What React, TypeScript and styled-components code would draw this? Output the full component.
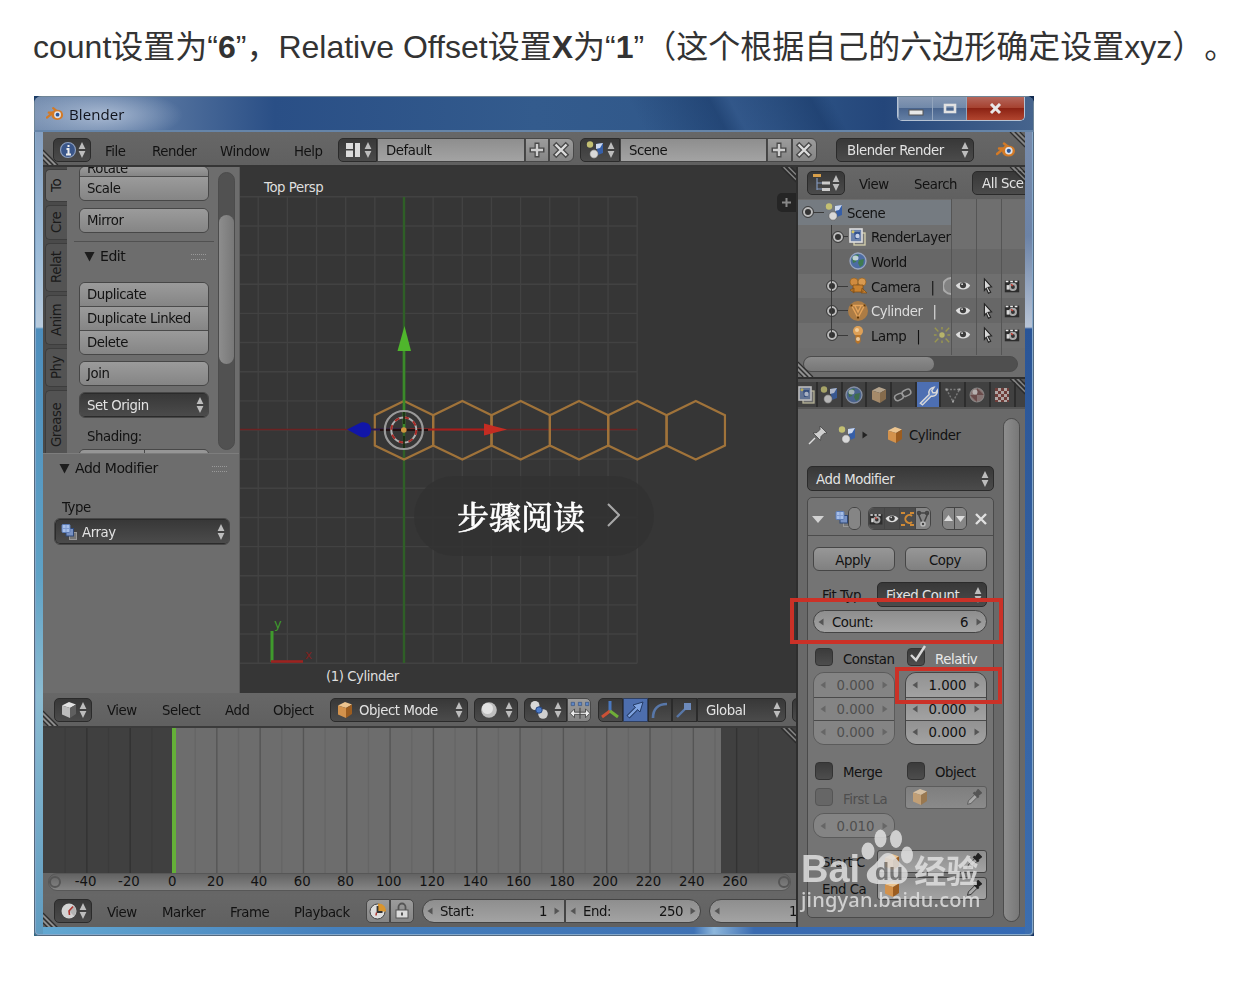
import React from "react";
import styled, { createGlobalStyle, css } from "styled-components";

const Global = createGlobalStyle`
  * { box-sizing: border-box; }
  body { margin: 0; background: #fff; }
`;

/* ---------- article ---------- */
const Page = styled.main`
  padding: 23px 0 58px 33px;
  width: 1242px;
  overflow: hidden;
`;
const Caption = styled.p`
  margin: 0;
  height: 48px;
  font: 32px/48px "Liberation Sans", "Noto Sans CJK SC", sans-serif;
  text-spacing-trim: space-all;
  color: #333;
  white-space: nowrap;
`;
const Shot = styled.div`
  position: relative;
  margin: 25px 0 0 1px;
  width: 1000px;
  height: 840px;
  overflow: hidden;
  background: linear-gradient(90deg, #1b3c66, #10294f) top / 100% 50% no-repeat, linear-gradient(90deg, #2f6580, #12305f) bottom / 100% 50% no-repeat;
`;

/* ---------- window frame ---------- */
const Win = styled.section`
  width: 1000px;
  height: 840px;
  padding: 0 9px 9px;
  display: flex;
  flex-direction: column;
  overflow: hidden;
  filter: blur(0.6px);
  font: 13.3px/16px "DejaVu Sans", sans-serif;
  letter-spacing: -0.45px;
  color: #121212;
  white-space: nowrap;
  border-radius: 8px 8px 5px 5px;
  box-shadow: inset 0 0 0 1px #54697e, inset 0 0 0 2px #86a9cb;
  background:
    linear-gradient(#7f97b8 0, #9bbbd8 150px, #b8cbdd 231px, #4d8dbc 233px, #5fa2c6 480px, #8cbcd2 600px, #5f9bc0 840px) left / 9px 100% no-repeat,
    linear-gradient(#7c8fae 0, #6c83a7 140px, #b8c4d6 231px, #2a5597 233px, #335f9f 480px, #3c6eb0 840px) right / 9px 100% no-repeat,
    linear-gradient(90deg, #64a9d2, #4580bd 30%, #3f72b4 66%, #8db7dc 68%, #3a6bb0 72%, #356ab4) bottom / 100% 9px no-repeat,
    #2b5083;
`;
const TitleBar = styled.header`
  height: 36px;
  flex: none;
  margin: 0 -9px;
  padding: 0 8px 0 11px;
  display: flex;
  border: 1px solid #6f8596;
  border-bottom: 2px solid #6685a9;
  background:
    radial-gradient(ellipse 80px 26px at 68px 18px, #b9c7dccc, #8fa8c800),
    linear-gradient(62deg, #0000 60%, #1b3b6a99 68%, #34578a80 70%, #1b3b6a99 78%, #0000 80%),
    linear-gradient(90deg, #7890b1, #5775a0 12%, #2a4f86 24%, #335b8d 50%, #2f5688 75%, #24467a 85%, #46648d);
`;
const TitleText = styled.h1`
  margin: 8px auto 0 5px;
  font: 15px/18px "Open Sans", sans-serif;
  letter-spacing: 0.1px;
  color: #10131c;
`;
const Captions = styled.div`
  display: flex;
  height: 24px;
  border: 1px solid #b6c3d4;
  border-top: 0;
  border-radius: 0 0 5px 5px;
  overflow: hidden;
`;
const CaptionBtn = styled.span<{ $w: number; $close?: boolean }>`
  width: ${(p) => p.$w}px;
  display: grid;
  place-items: center;
  border-left: 1px solid #93a5bd;
  background: ${(p) =>
    p.$close ? "linear-gradient(#b5665b, #a5412f 48%, #8c2314 50%, #b1452f)" : "linear-gradient(#8799b4, #7088a9 48%, #4a658e 50%, #647fa4)"};
`;
const Client = styled.div`
  flex: 1;
  min-height: 0;
  display: flex;
  flex-direction: column;
  background: #6c6c6c;
  overflow: hidden;
`;

/* ---------- shared widgets ---------- */
const Bar = styled.div<{ $h: number; $pt?: number }>`
  position: relative;
  height: ${(p) => p.$h}px;
  flex: none;
  padding-top: ${(p) => p.$pt ?? 0}px;
  display: flex;
  align-items: center;
  overflow: hidden;
  background: linear-gradient(#676767, #606060);
`;
const MenuWord = styled.span<{ $w: number }>`
  width: ${(p) => p.$w}px;
  padding-top: 3px;
  flex: none;
`;
const Control = styled.div<{ $w: number; $ml?: number; $r?: string; $tone?: "dark" | "light" | "field" | "blue" | "dim"; $h?: number }>`
  width: ${(p) => p.$w}px;
  height: ${(p) => p.$h ?? 24}px;
  margin-left: ${(p) => p.$ml ?? 0}px;
  flex: none;
  display: flex;
  align-items: center;
  justify-content: space-between;
  padding: 0 ${(p) => (p.$w < 30 ? 1 : 4)}px;
  overflow: hidden;
  border: 1px solid #363636;
  border-radius: ${(p) => p.$r ?? "5px"};
  svg { flex: none; }
  ${(p) => {
    switch (p.$tone) {
      case "light":
        return css`background: linear-gradient(#9c9c9c, #858585); border-color: #484848;`;
      case "field":
        return css`background: linear-gradient(#8e8e8e, #a3a3a3); border-color: #444;`;
      case "dim":
        return css`background: linear-gradient(#7f7f7f, #8a8a8a); border-color: #5c5c5c; color: #4b4b4b;`;
      case "blue":
        return css`background: #4d6eae; border-color: #2f3f60;`;
      default:
        return css`background: linear-gradient(#383838, #4b4b4b); color: #e2e2e2; border-color: #2b2b2b;`;
    }
  }}
`;
const Txt = styled.span<{ $ml?: number }>`
  padding-top: 2px;
  margin-left: ${(p) => p.$ml ?? 4}px;
`;
const Grow = styled.span`
  flex: 1;
`;

const UpDown = ({ c = "#bdbdbd" }: { c?: string }) => (
  <svg width="8" height="18" viewBox="0 0 8 18" fill={c}>
    <path d="M4 1 7.4 8H.6zM4 17 .6 10h6.800z" />
  </svg>
);
const Arrow = ({ flip, c = "#555" }: { flip?: boolean; c?: string }) => (
  <svg width="6" height="8" viewBox="0 0 6 8" fill={c}>
    <path d={flip ? "M.5 .5 5.5 4 .5 7.5z" : "M5.5 .5.5 4l5 3.5z"} />
  </svg>
);
const HatchSvg = styled.svg<{ $at: "bl" | "tr" }>`
  position: absolute;
  ${(p) => (p.$at === "bl" ? "left: 0; bottom: 0;" : "right: 0; top: 0;")}
`;
const Hatch = ({ at }: { at: "bl" | "tr" }) => (
  <HatchSvg $at={at} width="16" height="16" viewBox="0 0 16 16" fill="none" strokeWidth="1.1">
    {at === "bl" ? (
      <>
        <path d="M0 1 15 16M0 6l10 10M0 11l5 5" stroke="#2c2c2c" />
        <path d="M0 3.500 12.500 16M0 8.500 7.500 16" stroke="#999" />
      </>
    ) : (
      <>
        <path d="M1 0l15 15M6 0l10 10M11 0l5 5" stroke="#2c2c2c" />
        <path d="M3.500 0 16 12.500M8.500 0 16 7.500" stroke="#8b8b8b" />
      </>
    )}
  </HatchSvg>
);

/* ---------- icons ---------- */
const Icon = ({ s = 20, children }: { s?: number; children: React.ReactNode }) => (
  <svg width={s} height={s} viewBox="0 0 20 20" fill="none">
    {children}
  </svg>
);
const BlenderLogo = () => (
  <Icon s={20}>
    <path d="M1 14 10 6.500M3 8.500h8M8 3.500l5 4" stroke="#d37a26" strokeWidth="2.400" strokeLinecap="round" />
    <ellipse cx="12.500" cy="11" rx="6.500" ry="5.600" fill="#d37a26" />
    <circle cx="12.800" cy="10.800" r="3.800" fill="#dfe3ea" />
    <circle cx="12.800" cy="10.800" r="2.100" fill="#28569a" />
  </Icon>
);
const InfoIcon = () => (
  <Icon>
    <circle cx="10" cy="10" r="7.500" fill="#3a5689" stroke="#8b9dbd" strokeWidth="1.200" />
    <path d="M10.500 5v2M8.500 9h2v5.500M8 14.500h5" stroke="#eee" strokeWidth="2" />
  </Icon>
);
const LayoutIcon = () => (
  <Icon>
    <path d="M3 3h7v6H3zM3 10.500h7V17H3zM12 3h5v14h-5z" fill="#dcdcdc" />
  </Icon>
);
const SceneIcon = () => (
  <Icon>
    <circle cx="5" cy="4.500" r="3.200" fill="#c3bf72" />
    <path d="M11 4l7-1v10l-5 2z" fill="#365fa8" />
    <path d="M11 4l7-1-3 5-4 1z" fill="#cdd9ef" />
    <circle cx="9" cy="14" r="4.200" fill="#d8d8d8" stroke="#555" strokeWidth=".6" />
  </Icon>
);
const PlusIcon = () => (
  <Icon s={20}>
    <path d="M10 2.500v15M2.500 10h15" stroke="#4a4a4a" strokeWidth="5" />
    <path d="M10 4v12M4 10h12" stroke="#cfcfcf" strokeWidth="2.400" />
  </Icon>
);
const CrossIcon = () => (
  <Icon s={20}>
    <path d="M3.500 3.500l13 13M16.500 3.500l-13 13" stroke="#4a4a4a" strokeWidth="5" />
    <path d="M4.500 4.500l11 11M15.500 4.500l-11 11" stroke="#dcdcdc" strokeWidth="2.400" />
  </Icon>
);
const CubeIcon = ({ c = "orange", s = 20 }: { c?: "orange" | "grey" | "pale"; s?: number }) => {
  const [a, b, d] = { orange: ["#ecc48f", "#d3924c", "#9c5d20"], grey: ["#e3e3e3", "#bcbcbc", "#5f5f5f"], pale: ["#d5bfa2", "#c19f76", "#997850"] }[c];
  return (
    <Icon s={s}>
      <path d="M10 2l7 2.500-6 3.500L3 5.500z" fill={a} />
      <path d="M3 5.500 11 8v10l-8-3.500z" fill={b} />
      <path d="M17 4.500v9.500l-6 4V8z" fill={d} />
    </Icon>
  );
};
const TreeIcon = () => (
  <Icon>
    <path d="M1 2.500h8" stroke="#d9a04a" strokeWidth="3" />
    <path d="M5 5v12M5 10h5M5 16h5" stroke="#8298bd" strokeWidth="1.200" />
    <path d="M10 10h8M10 16.500h8" stroke="#ccc" strokeWidth="3" />
  </Icon>
);
const ArrayIcon = () => (
  <Icon>
    <rect x="9.500" y="10.500" width="7" height="7" fill="#777" stroke="#999" />
    <rect x="6" y="6.500" width="7.500" height="7.500" fill="#7892c4" stroke="#2e4877" />
    <rect x="2" y="2.500" width="8" height="8" rx="1" fill="#a6bfe9" stroke="#5b7bb5" />
    <path d="M6 3v7M2.500 6.500h7" stroke="#7f9bd0" />
  </Icon>
);
const LayersIcon = () => (
  <Icon>
    <rect x="6" y="6" width="11" height="12" fill="#777" stroke="#d8d3b0" strokeWidth="1.300" />
    <rect x="2" y="2" width="12" height="13" fill="#6d83ab" stroke="#dedede" strokeWidth="1.600" />
    <path d="M6 5h6v4l-2 3H7z" fill="#34538f" />
    <circle cx="9.500" cy="9" r="2.200" fill="#c7d2e8" />
    <circle cx="5" cy="4.800" r="1.500" fill="#d4c667" />
  </Icon>
);
const WorldIcon = () => (
  <Icon>
    <circle cx="10" cy="10" r="8" fill="#4d6da3" stroke="#9aa7c0" strokeWidth="1.300" />
    <path d="M4 7c3-4 6-4 7-3l-2 3-1 4-3 1zM11 9l5-1-1 6-3 2-2-4z" fill="#3f7a50" />
    <ellipse cx="7.500" cy="7" rx="3" ry="2.500" fill="#dfe8f2" opacity=".8" />
  </Icon>
);
const CameraIcon = () => (
  <Icon>
    <circle cx="6" cy="6" r="4" fill="#d08b3f" stroke="#94611f" strokeWidth=".7" />
    <circle cx="14" cy="6" r="4" fill="#d99a50" stroke="#94611f" strokeWidth=".7" />
    <path d="M5 9h10v7H5zM2 14l4-2v5zM14 12l5 5h-6z" fill="#c9822f" stroke="#7d4c14" strokeWidth=".7" />
  </Icon>
);
const MeshIcon = ({ c = "#d58a37" }: { c?: string }) => (
  <Icon>
    {c === "#d58a37" && <circle cx="10" cy="10" r="10" fill="#ac7c45" />}
    <path
      d={c === "#d58a37" ? "M3.500 4.500h13L10 16.500zM7 5l3 6 3-6" : "M3.500 4.500h13L10 16.500z"}
      stroke={c === "#d58a37" ? "#e5a45a" : c}
      strokeWidth="1.400"
      strokeDasharray={c === "#d58a37" ? undefined : "2 1.500"}
    />
    <path d="M2.500 3.500h2v2h-2zM15.500 3.500h2v2h-2zM9 15.500h2v2H9z" fill={c === "#d58a37" ? "#5e3607" : "#bbb"} />
  </Icon>
);
const LampIcon = () => (
  <Icon>
    <circle cx="10" cy="6" r="5" fill="#dda057" />
    <path d="M7.500 10h5v7l-2.500 2-2.500-2z" fill="#b87428" />
    <circle cx="10" cy="14" r="2" fill="#e9c79b" />
    <circle cx="9" cy="5" r="2" fill="#f1cd9c" />
  </Icon>
);
const EyeIcon = ({ s = 18 }: { s?: number }) => (
  <Icon s={s}>
    <path d="M2 9.500C5 4.500 15 4.500 18 9.500 15 15.500 5 15.500 2 9.500z" fill="#dedede" />
    <circle cx="10" cy="9.200" r="3.400" fill="#3c3c3c" />
    <circle cx="9" cy="8" r="1" fill="#ddd" />
  </Icon>
);
const PointerIcon = () => (
  <Icon s={18}>
    <path d="M6 2l8 9-4 .5 3 5.500-2.500 1-2.500-5.500L6 15z" fill="#d8d8d8" stroke="#222" strokeWidth="1.200" />
  </Icon>
);
const SnapIcon = ({ s = 18 }: { s?: number }) => (
  <Icon s={s}>
    <path d="M2 4h16v13H2z" fill="#2c2c2c" />
    <path d="M3 5h3M8 5h3M13 5h3" stroke="#eee" strokeWidth="1.600" />
    <circle cx="11" cy="11" r="4.500" fill="#a9a9a9" />
    <circle cx="11" cy="11" r="2.200" fill="#333" />
    <path d="M4 9h3v5H4z" fill="#d9d9d9" />
    <path d="M9 8l2 2" stroke="#c23b30" strokeWidth="1.600" />
  </Icon>
);
const WrenchIcon = () => (
  <Icon s={22}>
    <path d="M3 17.500 11 9.500C10 6 12 3.500 15.500 3L13.500 6l1 2L17 8l1.500-2.500c.5 4-2.500 6-5.500 5.500L5 19z" fill="#6386c6" stroke="#d8d8d8" strokeWidth="1.300" />
  </Icon>
);
const LinkIcon = () => (
  <Icon s={20}>
    <rect x="1.500" y="9" width="9" height="6" rx="3" transform="rotate(-25 6 12)" stroke="#b2b2b2" strokeWidth="1.500" />
    <rect x="9" y="5" width="9" height="6" rx="3" transform="rotate(-25 13 8)" stroke="#b2b2b2" strokeWidth="1.500" />
  </Icon>
);
const MaterialIcon = () => (
  <Icon s={20}>
    <circle cx="10" cy="10" r="7" fill="#9a8381" stroke="#aaa" strokeWidth=".8" />
    <path d="M10 3v7h7M3 10h7v7" fill="#6c4140" opacity=".8" />
    <circle cx="8" cy="7" r="2.500" fill="#d7d0cf" />
  </Icon>
);
const TextureIcon = () => (
  <Icon s={20}>
    <path d="M3 3h14v14H3z" fill="#cfc3c0" />
    <path d="M3 3h3v3H3zM9 3h3v3H9zM15 3h2v3h-2zM6 6h3v3H6zM12 6h3v3h-3zM3 9h3v3H3zM9 9h3v3H9zM15 9h2v3h-2zM6 12h3v3H6zM12 12h3v3h-3zM3 15h3v2H3zM9 15h3v2H9zM15 15h2v2h-2z" fill="#7c3c38" />
  </Icon>
);
const PinIcon = () => (
  <Icon>
    <path d="M1 19l6-6" stroke="#ddd" strokeWidth="1.500" />
    <path d="M12 1l7 7-3 .5-3 3-.5 4L5 8l4-.5 3-3z" fill="#cfcfcf" stroke="#444" strokeWidth=".8" />
  </Icon>
);
const DropperIcon = ({ c = "#222" }: { c?: string }) => (
  <Icon s={17}>
    <path d="M3 18l1-4 8-8 3 3-8 8z" fill="#a9a9a9" stroke={c} />
    <path d="M10 4l6 6M12 6l3.500-4.500 3 3L14 8" stroke={c} strokeWidth="2.600" fill={c} />
  </Icon>
);
const ClockIcon = () => (
  <Icon>
    <circle cx="10" cy="10" r="7.500" fill="#d4d4d4" />
    <path d="M10 10l5-5a7 7 0 0 1 0 10z" fill="#777" opacity=".35" />
    <path d="M14 5.500l-4 4.500.500 4" stroke="#b03630" strokeWidth="1.600" />
  </Icon>
);
const SphereIcon = () => (
  <Icon>
    <circle cx="10" cy="10" r="7.800" fill="#bdbdbd" />
    <circle cx="8.500" cy="8.500" r="5.500" fill="#e2e2e2" />
  </Icon>
);
const PivotIcon = () => (
  <Icon>
    <circle cx="6" cy="5.500" r="4.500" fill="#d8d8d8" />
    <circle cx="14" cy="14" r="4.800" fill="#cfcfcf" />
    <circle cx="10" cy="10" r="3.200" fill="#4c7cc9" stroke="#27457e" />
  </Icon>
);
const ManipIcon = () => (
  <Icon s={22}>
    <path d="M2 3h3v3H2zM8.500 3h3v3h-3zM15 3h3v3h-3z" fill="#5d86c5" stroke="#35517f" strokeWidth=".6" />
    <path d="M1 13l4-4v3h10V9l4 4-4 4v-3H5v3z" fill="#ededed" stroke="#444" strokeWidth=".8" />
    <path d="M10 8v10" stroke="#444" />
  </Icon>
);
const AxisIcon = () => (
  <Icon>
    <path d="M10 11V1" stroke="#4a78bf" strokeWidth="3" />
    <path d="M10 11l-8 6" stroke="#cb5136" strokeWidth="3" />
    <path d="M10 11l8 6" stroke="#6fae38" strokeWidth="3" />
  </Icon>
);
const TranslateIcon = () => (
  <Icon>
    <path d="M3 17 11 9" stroke="#243b66" strokeWidth="4.500" />
    <path d="M8 5l10-3-3 10z" fill="#7fa3e0" stroke="#243b66" />
    <path d="M3.500 16.500 12 8" stroke="#7fa3e0" strokeWidth="2.400" />
  </Icon>
);
const ArcIcon = () => (
  <Icon>
    <path d="M3 18C3 9 8 4 17 4" stroke="#5877a8" strokeWidth="2.600" />
  </Icon>
);
const ScaleIcon = () => (
  <Icon>
    <path d="M3 17l9-9" stroke="#5877a8" strokeWidth="2.400" />
    <path d="M10 3h7v7h-7z" fill="#6d8abb" />
  </Icon>
);
const AutoKeyIcon = () => (
  <Icon>
    <circle cx="9.500" cy="10.500" r="7.500" fill="#dedede" stroke="#444" />
    <path d="M10 2.500c5 0 8 3 8 8h-8z" fill="#d9952e" />
    <path d="M9.500 5v6h5" stroke="#333" strokeWidth="1.800" />
    <path d="M8.500 11.500l-.5 3" stroke="#b03630" strokeWidth="1.500" />
  </Icon>
);
const LockIcon = () => (
  <Icon>
    <path d="M6.500 9V6a3.500 3.500 0 0 1 7 0v3" stroke="#555" strokeWidth="1.800" />
    <rect x="4" y="9" width="12" height="8" fill="#dcdcdc" stroke="#555" />
    <path d="M10 11.500v3" stroke="#555" strokeWidth="2" />
  </Icon>
);

/* ---------- main split ---------- */
const Split = styled.div`
  flex: 1;
  min-height: 0;
  display: flex;
  border-top: 2px solid #353535;
`;
const LeftSide = styled.div`
  width: 753px;
  flex: none;
  display: flex;
  flex-direction: column;
`;
const RightSide = styled.div`
  flex: 1;
  min-width: 0;
  display: flex;
  flex-direction: column;
  border-left: 2px solid #2e2e2e;
`;
const ViewRow = styled.div`
  height: 526px;
  display: flex;
  flex: none;
`;

/* ---------- tool shelf ---------- */
const Shelf = styled.aside`
  width: 197px;
  flex: none;
  background: #6d6d6d;
  border-right: 1px solid #5c5c5c;
`;
const ShelfTop = styled.div`
  height: 287px;
  display: flex;
  overflow: hidden;
  border-bottom: 1px solid #7d7d7d;
`;
const Tabs = styled.nav`
  width: 24px;
  background: #4a4a4a;
  display: flex;
  flex-direction: column;
  align-items: flex-end;
  gap: 3px;
  padding-top: 2px;
`;
const Tab = styled.span<{ $h: number; $on?: boolean }>`
  width: 22px;
  height: ${(p) => p.$h}px;
  flex: none;
  writing-mode: vertical-rl;
  transform: rotate(180deg);
  display: flex;
  align-items: center;
  justify-content: center;
  border: 1px solid #3d3d3d;
  border-left: 0;
  border-radius: 0 5px 5px 0;
  background: ${(p) => (p.$on ? "#6d6d6d" : "#535353")};
  color: #1a1a1a;
`;
const ToolCol = styled.div`
  width: 130px;
  margin-left: 12px;
`;
const Stack = styled.div<{ $mt?: number }>`
  margin-top: ${(p) => p.$mt ?? 0}px;
  border: 1px solid #474747;
  border-radius: 6px;
  overflow: hidden;
`;
const Tool = styled.div<{ $h?: number }>`
  height: ${(p) => p.$h ?? 23}px;
  padding: 4px 0 0 7px;
  background: linear-gradient(#9b9b9b, #858585);
  & + & {
    border-top: 1px solid #4b4b4b;
    height: 24px;
  }
`;
const CutTool = styled(Tool)`
  height: 9px;
  display: flex;
  align-items: flex-end;
  padding: 0 0 0 7px;
  line-height: 14px;
`;
const SectionHead = styled.h2<{ $mt: number; $line?: boolean }>`
  margin: ${(p) => p.$mt}px -5px 0;
  padding: 6px 6px 0 10px;
  height: 41px;
  display: flex;
  align-items: flex-start;
  font: 14px/17px "DejaVu Sans", sans-serif;
  border-top: ${(p) => (p.$line ? "1px solid #515151" : "0")};
  svg { margin: 3px 5px 0 0; }
`;
const Grip = styled.span`
  margin: 6px 2px 0 auto;
  width: 15px;
  height: 6px;
  border: dotted #999;
  border-width: 1px 0;
`;
const Small = styled.div<{ $mt: number; $ml: number }>`
  margin: ${(p) => p.$mt}px 0 0 ${(p) => p.$ml}px;
`;
const HalfRow = styled.div`
  margin-top: 4px;
  height: 12px;
  display: grid;
  grid-template-columns: 1fr 1fr;
  gap: 1px;
  background: #484848;
  border: 1px solid #484848;
  border-radius: 5px;
  overflow: hidden;
  i { background: #969696; }
`;
const VScroll = styled.div<{ $h: number; $mt: number; $ml: number }>`
  width: 17px;
  height: ${(p) => p.$h}px;
  margin: ${(p) => p.$mt}px 0 0 ${(p) => p.$ml}px;
  border: 1px solid #4c4c4c;
  border-radius: 9px;
  background: #515151;
  flex: none;
`;
const Thumb = styled.div<{ $mt: number; $h: number }>`
  height: ${(p) => p.$h}px;
  transform: translateY(${(p) => p.$mt}px);
  border-radius: 8px;
  background: linear-gradient(90deg, #8d8d8d, #787878);
`;
const Operator = styled.div`
  padding: 0 9px 0 11px;
`;
const Tri = () => (
  <svg width="11" height="11" viewBox="0 0 11 11" fill="#1d1d1d">
    <path d="M.5 1h10l-5 9.500z" />
  </svg>
);

/* ---------- 3D viewport ---------- */
const Viewport = styled.div`
  position: relative;
  flex: 1;
  background: #363636;
  overflow: hidden;
  svg { display: block; }
`;
const ViewText = styled.span<{ $x: number; $y: number }>`
  position: absolute;
  left: ${(p) => p.$x}px;
  top: ${(p) => p.$y}px;
  color: #dedede;
`;
const PlusTab = styled.span`
  position: absolute;
  right: 0;
  top: 26px;
  width: 19px;
  height: 19px;
  border-radius: 5px 0 0 5px;
  background: #252525;
  display: grid;
  place-items: center;
`;

const Scene3D = () => {
  const s = 29.15;
  const cx = 164;
  const cy = 264;
  const cols = Array.from({ length: 14 }, (_, i) => cx + (i - 5) * s);
  const rows = Array.from({ length: 17 }, (_, i) => cy + (i - 8) * s);
  return (
    <svg width="556" height="526" viewBox="0 1 556 526" fill="none">
      <g stroke="#424242" strokeWidth="1.400">
        {cols.map((x) => <path key={x} d={`M${x} ${cy - 8 * s}V${cy + 8 * s}`} />)}
        {rows.map((y) => <path key={y} d={`M0 ${y}H${cx + 8 * s}`} />)}
      </g>
      <path d={`M0 263.500H${cx + 8 * s}`} stroke="#6b2222" strokeWidth="1.500" />
      <path d={`M${cx} 31V497`} stroke="#2f5f27" strokeWidth="2.400" />
      <g stroke="#a0733a" strokeWidth="2.200">
        {[0, 1, 2, 3, 4, 5].map((i) => {
          const x = cx + i * 58.35;
          return <path key={i} d={`M${x} 235l29.200 14.300v30.200L${x} 293.500l-29.200-14V249.300z`} />;
        })}
      </g>
      <path d="M164 264V184" stroke="#3b8a2a" strokeWidth="2.600" />
      <path d="M157.500 185h13.500L164.500 160z" fill="#4fb62c" />
      <path d="M170 263.500h78" stroke="#a81f1c" strokeWidth="2" />
      <path d="M244 257.500 267 263.500 244 269.500z" fill="#c42c22" />
      <path d="M131 263.500h33" stroke="#271a55" strokeWidth="2" />
      <path d="M140 264h48" stroke="#231010" strokeWidth="2" />
      <path d="M107 263.500 121 256.500c7-1 10 3 10 7.500s-4 9-10 7z" fill="#1116a8" />
      <circle cx="163.800" cy="264" r="19" stroke="#9a9a9a" strokeWidth="2.200" />
      <circle cx="163.800" cy="264" r="12.500" stroke="#b0b0b0" strokeWidth="2" />
      <circle cx="163.800" cy="264" r="12.500" stroke="#a82a26" strokeWidth="2" strokeDasharray="4.900 4.900" />
      <path d="M164 246v12M164 270v12" stroke="#16240f" strokeWidth="1.600" />
      <circle cx="163.800" cy="264" r="2.800" fill="#cf943f" />
      <path d="M32 465v31" stroke="#3f9a2c" strokeWidth="3" />
      <path d="M31 495.500h32" stroke="#9c2320" strokeWidth="2.600" />
      <text x="34" y="462" fill="#3f9a2c" fontSize="13">y</text>
      <text x="65" y="493" fill="#7e2220" fontSize="12">x</text>
    </svg>
  );
};

/* ---------- timeline ---------- */
const Timeline = styled.div`
  position: relative;
  height: 147px;
  flex: none;
  border-top: 2px solid #3b3b3b;
  svg { display: block; }
`;
const TimelineArt = () => (
  <svg width="753" height="145" viewBox="0 0 753 145">
    <rect width="753" height="145" fill="#404040" />
    <rect x="130" width="548" height="145" fill="#6d6d6d" />
    {Array.from({ length: 33 }, (_, i) => {
      const x = 22.2 + i * 21.66;
      return <path key={i} d={`M${x} 0V145`} stroke="#000" strokeOpacity={i % 2 ? 0.22 : 0.07} strokeWidth="1.400" />;
    })}
    <rect x="129" width="4" height="145" fill="#64b038" />
  </svg>
);
const RulerWrap = styled.div`
  height: 21px;
  padding: 0 5px 3px 5px;
  background: #666;
  flex: none;
`;
const Ruler = styled.div`
  display: flex;
  align-items: center;
  height: 18px;
  border-radius: 9px;
  border: 1px solid #575757;
  background: linear-gradient(#636363, #858585);
`;
const Knob = styled.i`
  width: 12px;
  height: 12px;
  border-radius: 50%;
  border: 2px solid #565656;
  flex: none;
`;
const Ticks = styled.div`
  display: flex;
  flex: 1;
  padding-left: 3px;
`;
const Tick = styled.span`
  width: 43.3px;
  text-align: center;
  flex: none;
  letter-spacing: 0;
`;

/* ---------- outliner ---------- */
const Outliner = styled.div`
  position: relative;
  height: 180px;
  flex: none;
  background: #6d6d6d;
  border-bottom: 2px solid #2f2f2f;
  padding-top: 1px;
  overflow: hidden;
`;
const TreeRow = styled.div<{ $pl: number; $alt?: boolean; $on?: boolean }>`
  height: 24.6px;
  padding-left: ${(p) => p.$pl}px;
  display: flex;
  align-items: center;
  background: ${(p) => (p.$on ? "linear-gradient(90deg, #757b81 153px, #6f6f6f 153px)" : p.$alt ? "#676767" : "#6f6f6f")};
`;
const Name = styled.span<{ $c?: string }>`
  padding-top: 3px;
  margin-left: 3px;
  color: ${(p) => p.$c ?? "#121212"};
  flex: 1;
  overflow: hidden;
`;
const Node = styled.i`
  width: 10px;
  height: 10px;
  border: 2px solid #bbb;
  outline: 1px solid #3c3c3c;
  border-radius: 50%;
  background: #333;
  flex: none;
`;
const Dash = styled.i<{ $w: number }>`
  width: ${(p) => p.$w}px;
  height: 1px;
  background: #3a3a3a;
  flex: none;
`;
const Cells = styled.div`
  width: 74px;
  flex: none;
  display: grid;
  grid-template-columns: repeat(3, 24.600px);
  justify-items: center;
  align-self: stretch;
  align-items: center;
  svg { display: block; }
`;
const ColLine = styled.i<{ $x: number }>`
  position: absolute;
  top: 0;
  left: ${(p) => p.$x}px;
  width: 1px;
  height: 156px;
  background: #555;
`;
const TreeLine = styled.i`
  position: absolute;
  left: 33px;
  top: 26px;
  height: 112px;
  width: 1px;
  background: #3a3a3a;
`;
const HScroll = styled.div`
  margin: 8px 7px 0 5px;
  height: 16px;
  border-radius: 8px;
  border: 1px solid #4c4c4c;
  background: #4f4f4f;
`;
const HThumb = styled.div`
  width: 130px;
  height: 14px;
  border-radius: 7px;
  background: linear-gradient(#8b8b8b, #777);
`;

/* ---------- properties ---------- */
const PropTabs = styled.div`
  position: relative;
  height: 30px;
  flex: none;
  display: flex;
  padding: 3px 0 2px;
  background: #555;
  overflow: hidden;
`;
const PropTab = styled.span<{ $on?: boolean; $w?: number }>`
  width: ${(p) => p.$w ?? 24.7}px;
  flex: none;
  display: flex;
  justify-content: center;
  align-items: center;
  overflow: hidden;
  background: ${(p) => (p.$on ? "#4d6fb2" : "#414141")};
  border-right: 2px solid #2d2d2d;
  svg { flex: none; opacity: ${(p) => (p.$on ? 1 : 0.78)}; }
`;
const Props = styled.div`
  flex: 1;
  min-height: 0;
  display: flex;
  background: #696969;
`;
const PropCol = styled.div`
  width: 187px;
  margin-left: 9px;
`;
const Crumbs = styled.div`
  height: 57px;
  display: flex;
  align-items: center;
  padding: 0 0 6px 1px;
`;
const ModBox = styled.div`
  margin-top: 6px;
  height: 421px;
  border: 1px solid #4a4a4a;
  border-radius: 5px;
  background: #747474;
  overflow: hidden;
`;
const ModHead = styled.div`
  height: 38px;
  padding: 4px 5px 0 4px;
  display: flex;
  align-items: center;
  border-bottom: 1px solid #4c4c4c;
`;
const Pill = styled.div<{ $w: number; $ml: number }>`
  width: ${(p) => p.$w}px;
  height: 23px;
  margin-left: ${(p) => p.$ml}px;
  border: 1px solid #444;
  border-radius: 6px;
  background: #828282;
  display: flex;
  align-items: center;
  overflow: hidden;
  flex: none;
  svg { flex: none; }
`;
const PillCell = styled.span<{ $dark?: boolean }>`
  flex: 1;
  height: 100%;
  display: flex;
  align-items: center;
  justify-content: center;
  background: ${(p) => (p.$dark ? "#4c4c4c" : "#858585")};
  overflow: hidden;
  & + & { border-left: 1px solid #444; }
`;
const Grid2 = styled.div<{ $mt: number }>`
  margin: ${(p) => p.$mt}px 5px 0;
  display: grid;
  grid-template-columns: 82px 82px;
  column-gap: 10px;
  align-items: center;
`;
const PushBtn = styled.div`
  height: 24px;
  padding: 5px 2px 0 0;
  text-align: center;
  border: 1px solid #464646;
  border-radius: 6px;
  background: linear-gradient(#979797, #808080);
`;
const Line = styled.div<{ $mt: number }>`
  margin: ${(p) => p.$mt}px 5px 0;
  display: flex;
  align-items: center;
`;
const Check = styled.div<{ $dim?: boolean; $lit?: boolean }>`
  display: flex;
  align-items: center;
  height: 20px;
  padding-left: 2px;
  color: ${(p) => (p.$dim ? "#4e4e4e" : p.$lit ? "#e8e8e8" : "#121212")};
  span { padding-top: 5px; margin-left: 10px; }
  i {
    width: 18px;
    height: 18px;
    border-radius: 4px;
    border: 1px solid ${(p) => (p.$dim ? "#555" : "#333")};
    background: ${(p) => (p.$dim ? "#666" : "linear-gradient(#3b3b3b, #4d4d4d)")};
  }
  svg { display: block; overflow: visible; }
`;
const Vector = styled.div<{ $dim?: boolean }>`
  border: 1px solid ${(p) => (p.$dim ? "#5b5b5b" : "#444")};
  border-radius: 11px;
  overflow: hidden;
  color: ${(p) => (p.$dim ? "#4f4f4f" : "#121212")};
  letter-spacing: 0;
`;
const VecCell = styled.div<{ $dim?: boolean }>`
  height: 23.6px;
  padding: 0 6px;
  display: flex;
  align-items: center;
  justify-content: space-between;
  background: ${(p) => (p.$dim ? "#848484" : "linear-gradient(#929292, #a2a2a2)")};
  & + & { border-top: 1px solid ${(p) => (p.$dim ? "#5b5b5b" : "#4a4a4a")}; }
  span { padding: 2px 0 0 3px; }
`;

/* ---------- overlays ---------- */
const RedBox = styled.div<{ $x: number; $y: number; $w: number; $h: number }>`
  position: absolute;
  left: ${(p) => p.$x}px;
  top: ${(p) => p.$y}px;
  width: ${(p) => p.$w}px;
  height: ${(p) => p.$h}px;
  border: 4px solid #cb3127;
  filter: blur(0.4px);
`;
const StepPill = styled.div`
  position: absolute;
  left: 380px;
  top: 380px;
  width: 240px;
  height: 80px;
  border-radius: 40px;
  background: rgba(50, 50, 50, 0.88);
  display: flex;
  align-items: center;
  padding: 0 0 2px 43px;
  font: 500 32px/48px "Noto Serif CJK SC", "Noto Sans CJK SC", sans-serif;
  -webkit-text-stroke: 0.5px #fff;
  color: #fff;
  svg { margin: 0 0 1px 22px; }
`;
const Mark = styled.div`
  position: absolute;
  left: 767px;
  top: 732px;
  width: 184px;
  color: #e0e0e0;
  opacity: 0.85;
  white-space: nowrap;
  filter: blur(0.4px);
`;
const MarkTop = styled.div`
  height: 60px;
  display: flex;
  align-items: flex-end;
  font: 700 38px/38px "Liberation Sans", sans-serif;
  svg { margin: 0 0 4px 1px; flex: none; }
  b { font: 700 32px/38px "Noto Sans CJK SC", sans-serif; margin-left: 1px; }
`;
const MarkUrl = styled.div`
  font: 500 20px/24px "Noto Sans", sans-serif;
  letter-spacing: 0.2px;
`;

const objects = [
  { name: "Camera", icon: <CameraIcon />, color: undefined },
  { name: "Cylinder", icon: <MeshIcon />, color: "#dcdcdc" },
  { name: "Lamp", icon: <LampIcon />, color: undefined },
];
const ticks = [-40, -20, 0, 20, 40, 60, 80, 100, 120, 140, 160, 180, 200, 220, 240, 260];

const VectorField = ({ values, dim }: { values: string[]; dim?: boolean }) => (
  <Vector $dim={dim}>
    {values.map((v, i) => (
      <VecCell key={i} $dim={dim}>
        <Arrow c={dim ? "#666" : "#555"} />
        <span>{v}</span>
        <Arrow flip c={dim ? "#666" : "#555"} />
      </VecCell>
    ))}
  </Vector>
);

export default function App() {
  return (
    <Page>
      <Global />
      <Caption>
        count设置为“<b>6</b>”，Relative Offset设置<b>X</b>为“<b>1</b>”（这个根据自己的六边形确定设置xyz）。
      </Caption>
      <Shot>
        <Win>
          <TitleBar>
            <svg width="18" height="34" viewBox="0 -7 20 34"><BlenderLogo /></svg>
            <TitleText>Blender</TitleText>
            <Captions>
              <CaptionBtn $w={34}>
                <svg width="16" height="14"><rect x="1" y="8" width="14" height="5" fill="#e8e8e8" stroke="#555" /></svg>
              </CaptionBtn>
              <CaptionBtn $w={34}>
                <svg width="14" height="12"><rect x="2" y="2" width="10" height="7" fill="none" stroke="#e2e2e2" strokeWidth="2.600" /></svg>
              </CaptionBtn>
              <CaptionBtn $w={58} $close>
                <svg width="14" height="12"><path d="M2 1l9 9M11 1l-9 9" stroke="#e8e8e8" strokeWidth="3" /></svg>
              </CaptionBtn>
            </Captions>
          </TitleBar>
          <Client>
            <Bar $h={33} $pt={3}>
              <Control $w={38} $ml={10}><InfoIcon /><UpDown /></Control>
              <MenuWord $w={14} />
              <MenuWord $w={47}>File</MenuWord>
              <MenuWord $w={68}>Render</MenuWord>
              <MenuWord $w={74}>Window</MenuWord>
              <MenuWord $w={44}>Help</MenuWord>
              <Control $w={39} $r="5px 0 0 5px"><LayoutIcon /><UpDown /></Control>
              <Control $w={148} $tone="field" $r="0"><Txt>Default</Txt></Control>
              <Control $w={24} $tone="light" $r="0"><PlusIcon /></Control>
              <Control $w={25} $tone="light" $r="0 6px 6px 0"><CrossIcon /></Control>
              <Control $w={40} $ml={6} $r="5px 0 0 5px"><SceneIcon /><UpDown /></Control>
              <Control $w={147} $tone="field" $r="0"><Txt>Scene</Txt></Control>
              <Control $w={25} $tone="light" $r="0"><PlusIcon /></Control>
              <Control $w={25} $tone="light" $r="0 6px 6px 0"><CrossIcon /></Control>
              <Control $w={138} $ml={19}><Txt $ml={6}>Blender Render</Txt><UpDown /></Control>
              <MenuWord $w={22} />
              <BlenderLogo />
              <Hatch at="bl" />
              <Hatch at="tr" />
            </Bar>
            <Split>
              <LeftSide>
                <ViewRow>
                  <Shelf>
                    <ShelfTop>
                      <Tabs>
                        <Tab $h={33} $on>To</Tab>
                        <Tab $h={35}>Cre</Tab>
                        <Tab $h={49}>Relat</Tab>
                        <Tab $h={50}>Anim</Tab>
                        <Tab $h={39}>Phy</Tab>
                        <Tab $h={70}>Grease</Tab>
                      </Tabs>
                      <ToolCol>
                        <Stack $mt={-1}>
                          <CutTool>Rotate</CutTool>
                          <Tool>Scale</Tool>
                        </Stack>
                        <Stack $mt={7}><Tool>Mirror</Tool></Stack>
                        <SectionHead $mt={8} $line><Tri />Edit<Grip /></SectionHead>
                        <Stack>
                          <Tool>Duplicate</Tool>
                          <Tool>Duplicate Linked</Tool>
                          <Tool>Delete</Tool>
                        </Stack>
                        <Stack $mt={6}><Tool>Join</Tool></Stack>
                        <Stack $mt={6}>
                          <Control $w={130} $ml={-1} $r="4px"><Txt $ml={3}>Set Origin</Txt><UpDown /></Control>
                        </Stack>
                        <Small $mt={11} $ml={8}>Shading:</Small>
                        <HalfRow><i /><i /></HalfRow>
                      </ToolCol>
                      <VScroll $h={278} $mt={5} $ml={9}><Thumb $mt={42} $h={149} /></VScroll>
                    </ShelfTop>
                    <Operator>
                      <SectionHead $mt={0}><Tri />Add Modifier<Grip /></SectionHead>
                      <Small $mt={5} $ml={8}>Type</Small>
                      <Stack $mt={2}>
                        <Control $w={175} $r="4px" $h={25}><ArrayIcon /><Txt $ml={2}>Array</Txt><Grow /><UpDown /></Control>
                      </Stack>
                    </Operator>
                  </Shelf>
                  <Viewport>
                    <Scene3D />
                    <ViewText $x={24} $y={13}>Top Persp</ViewText>
                    <ViewText $x={86} $y={502}>(1) Cylinder</ViewText>
                    <PlusTab>
                      <svg width="9" height="9"><path d="M4.500 0v9M0 4.500h9" stroke="#888" strokeWidth="2" /></svg>
                    </PlusTab>
                    <Hatch at="tr" />
                  </Viewport>
                </ViewRow>
                <Bar $h={33}>
                  <Control $w={38} $ml={11}><CubeIcon c="grey" /><UpDown /></Control>
                  <MenuWord $w={15} />
                  <MenuWord $w={55}>View</MenuWord>
                  <MenuWord $w={63}>Select</MenuWord>
                  <MenuWord $w={48}>Add</MenuWord>
                  <MenuWord $w={57}>Object</MenuWord>
                  <Control $w={138}><CubeIcon /><Txt $ml={4}>Object Mode</Txt><Grow /><UpDown /></Control>
                  <Control $w={44} $ml={6}><SphereIcon /><UpDown /></Control>
                  <Control $w={43} $ml={6} $r="5px 0 0 5px"><PivotIcon /><UpDown /></Control>
                  <Control $w={24} $tone="light" $r="0 5px 5px 0"><ManipIcon /></Control>
                  <Control $w={25} $ml={7} $r="5px 0 0 5px"><AxisIcon /></Control>
                  <Control $w={25} $r="0" $tone="blue"><TranslateIcon /></Control>
                  <Control $w={24} $r="0"><ArcIcon /></Control>
                  <Control $w={25} $r="0"><ScaleIcon /></Control>
                  <Control $w={89} $r="0 5px 5px 0"><Txt>Global</Txt><UpDown /></Control>
                  <Control $w={20} $ml={6}><span /></Control>
                  <Hatch at="bl" />
                </Bar>
                <Timeline><TimelineArt /><Hatch at="tr" /></Timeline>
                <RulerWrap>
                  <Ruler>
                    <Knob />
                    <Ticks>{ticks.map((t) => <Tick key={t}>{t}</Tick>)}</Ticks>
                    <Knob />
                  </Ruler>
                </RulerWrap>
                <Bar $h={34}>
                  <Control $w={38} $ml={11}><ClockIcon /><UpDown /></Control>
                  <MenuWord $w={15} />
                  <MenuWord $w={55}>View</MenuWord>
                  <MenuWord $w={68}>Marker</MenuWord>
                  <MenuWord $w={64}>Frame</MenuWord>
                  <MenuWord $w={72}>Playback</MenuWord>
                  <Control $w={24} $tone="light" $r="5px 0 0 5px"><AutoKeyIcon /></Control>
                  <Control $w={24} $tone="light" $r="0 5px 5px 0"><LockIcon /></Control>
                  <Control $w={143} $ml={8} $tone="field" $r="12px 0 0 12px"><Arrow /><Txt $ml={7}>Start:</Txt><Grow /><Txt>1</Txt><Txt $ml={7} /><Arrow flip /></Control>
                  <Control $w={136} $tone="field" $r="0 12px 12px 0"><Arrow /><Txt $ml={7}>End:</Txt><Grow /><Txt>250</Txt><Txt $ml={7} /><Arrow flip /></Control>
                  <Control $w={110} $ml={8} $tone="field" $r="12px"><Arrow /><Txt $ml={69}>1</Txt><Grow /></Control>
                  <Hatch at="bl" />
                </Bar>
              </LeftSide>

              <RightSide>
                <Bar $h={32}>
                  <Control $w={38} $ml={9}><TreeIcon /><UpDown /></Control>
                  <MenuWord $w={14} />
                  <MenuWord $w={55}>View</MenuWord>
                  <MenuWord $w={58}>Search</MenuWord>
                  <Control $w={70}><Txt $ml={5}>All Sce</Txt></Control>
                  <Hatch at="tr" />
                </Bar>
                <Outliner>
                  <TreeLine />
                  <TreeRow $pl={5} $on><Node /><Dash $w={11} /><SceneIcon /><Name>Scene</Name></TreeRow>
                  <TreeRow $pl={35}><Node /><Dash $w={5} /><LayersIcon /><Name>RenderLayer</Name><Cells /></TreeRow>
                  <TreeRow $pl={50} $alt><WorldIcon /><Name>World</Name></TreeRow>
                  {objects.map((o, i) => (
                    <TreeRow key={o.name} $pl={29} $alt={i === 1}>
                      <Node /><Dash $w={11} />{o.icon}
                      <Name $c={o.color}>{o.name}<Txt $ml={10}>|</Txt></Name>
                      {o.name === "Lamp" && (
                        <Icon s={18}>
                          <circle cx="10" cy="10" r="3" fill="#b6b36a" />
                          <path d="M2 2l4 4M18 2l-4 4M2 18l4-4M18 18l-4-4M10 1v3M10 16v3M1 10h3M16 10h3" stroke="#99964f" strokeWidth="1.600" />
                        </Icon>
                      )}
                      {o.name === "Camera" && (
                        <svg width="8" height="20"><path d="M8 2a8 8 0 0 0 0 16" stroke="#aaa" strokeWidth="2" fill="#828282" /></svg>
                      )}
                      <Cells><EyeIcon /><PointerIcon /><SnapIcon /></Cells>
                    </TreeRow>
                  ))}
                  <ColLine $x={153} />
                  <ColLine $x={178} />
                  <ColLine $x={203} />
                  <HScroll><HThumb /></HScroll>
                  <Hatch at="bl" />
                </Outliner>
                <PropTabs>
                  <PropTab $w={20}><LayersIcon /></PropTab>
                  <PropTab><SceneIcon /></PropTab>
                  <PropTab><WorldIcon /></PropTab>
                  <PropTab><CubeIcon c="pale" /></PropTab>
                  <PropTab><LinkIcon /></PropTab>
                  <PropTab $on><WrenchIcon /></PropTab>
                  <PropTab><MeshIcon c="#8a8a8a" /></PropTab>
                  <PropTab><MaterialIcon /></PropTab>
                  <PropTab><TextureIcon /></PropTab>
                  <PropTab />
                  <Hatch at="tr" />
                </PropTabs>
                <Props>
                  <PropCol>
                    <Crumbs>
                      <PinIcon />
                      <MenuWord $w={9} />
                      <SceneIcon />
                      <MenuWord $w={5} />
                      <Arrow flip c="#222" />
                      <MenuWord $w={17} />
                      <CubeIcon />
                      <Txt>Cylinder</Txt>
                    </Crumbs>
                    <Control $w={187} $h={25}><Txt>Add Modifier</Txt><UpDown /></Control>
                    <ModBox>
                      <ModHead>
                        <svg width="12" height="8"><path d="M0 1h12L6 8z" fill="#d2d2d2" /></svg>
                        <MenuWord $w={10} />
                        <ArrayIcon />
                        <Pill $w={13} $ml={-6}><PillCell /></Pill>
                        <Pill $w={63} $ml={7}>
                          <PillCell $dark><SnapIcon s={16} /></PillCell>
                          <PillCell $dark><EyeIcon s={16} /></PillCell>
                          <PillCell $dark>
                            <svg width="15" height="18" fill="none" stroke="#d08a35" strokeWidth="2"><path d="M1 3h4M10 3h4M1 15h4M10 15h4M12 6a4 4 0 1 0 0 6" /></svg>
                          </PillCell>
                          <PillCell>
                            <svg width="14" height="18" fill="none" stroke="#444" strokeWidth="1.500"><path d="M2 3h10L7 15z" /><circle cx="7" cy="14" r="2" stroke="#bbb" /><circle cx="3" cy="3" r="1.500" /><circle cx="11" cy="3" r="1.500" /></svg>
                          </PillCell>
                        </Pill>
                        <Pill $w={25} $ml={11}>
                          <PillCell><svg width="9" height="7"><path d="M0 6h9L4.500 0z" fill="#ddd" /></svg></PillCell>
                          <PillCell><svg width="9" height="7"><path d="M0 1h9L4.500 7z" fill="#ddd" /></svg></PillCell>
                        </Pill>
                        <Grow />
                        <svg width="14" height="14"><path d="M2 2l10 10M12 2 2 12" stroke="#e0e0e0" strokeWidth="2.400" /></svg>
                      </ModHead>
                      <Grid2 $mt={11}><PushBtn>Apply</PushBtn><PushBtn>Copy</PushBtn></Grid2>
                      <Line $mt={11}>
                        <MenuWord $w={64}><Txt $ml={9}>Fit Typ</Txt></MenuWord>
                        <Control $w={110} $h={25}><Txt>Fixed Count</Txt><UpDown /></Control>
                      </Line>
                      <Line $mt={3}>
                        <Control $w={174} $h={23} $tone="field" $r="12px"><Arrow /><Txt $ml={8}>Count:</Txt><Grow /><Txt>6</Txt><Txt $ml={8} /><Arrow flip /></Control>
                      </Line>
                      <Grid2 $mt={14}>
                        <Check><i /><span>Constan</span></Check>
                        <Check $lit>
                          <i><svg width="16" height="16"><path d="M3 6l5 5L17-3" stroke="#d8d8d8" strokeWidth="2.400" fill="none" /></svg></i>
                          <span>Relativ</span>
                        </Check>
                      </Grid2>
                      <Grid2 $mt={5}>
                        <VectorField dim values={["0.000", "0.000", "0.000"]} />
                        <VectorField values={["1.000", "0.000", "0.000"]} />
                      </Grid2>
                      <Grid2 $mt={16}>
                        <Check><i /><span>Merge</span></Check>
                        <Check><i /><span>Object</span></Check>
                      </Grid2>
                      <Grid2 $mt={5}>
                        <Check $dim><i /><span>First La</span></Check>
                        <Control $w={82} $h={23} $tone="dim" $r="3px"><CubeIcon c="pale" /><DropperIcon c="#555" /></Control>
                      </Grid2>
                      <Grid2 $mt={4}><VectorField dim values={["0.010"]} /></Grid2>
                      <Line $mt={12}>
                        <MenuWord $w={64}><Txt $ml={9}>Start C</Txt></MenuWord>
                        <Control $w={110} $h={23} $tone="field" $r="3px"><CubeIcon /><DropperIcon /></Control>
                      </Line>
                      <Line $mt={4}>
                        <MenuWord $w={64}><Txt $ml={9}>End Ca</Txt></MenuWord>
                        <Control $w={110} $h={23} $tone="field" $r="3px"><CubeIcon /><DropperIcon /></Control>
                      </Line>
                    </ModBox>
                  </PropCol>
                  <VScroll $h={504} $mt={9} $ml={9}><Thumb $mt={0} $h={502} /></VScroll>
                </Props>
              </RightSide>
            </Split>
          </Client>
        </Win>
        <RedBox $x={756} $y={502} $w={213} $h={46} />
        <RedBox $x={861} $y={571} $w={107} $h={37} />
        <Mark>
          <MarkTop>
            Bai
            <svg width="52" height="55" viewBox="0 0 52 55" fill="#e0e0e0">
              <ellipse cx="7" cy="22" rx="6.500" ry="8.500" />
              <ellipse cx="19.500" cy="9.500" rx="6" ry="9" />
              <ellipse cx="35" cy="10" rx="6" ry="9" />
              <ellipse cx="46" cy="26" rx="6" ry="8.500" />
              <path d="M27 24c6 0 8 6 13 11 6 5 8 8 6 14-2 5-7 6-12 6H18c-6 0-11-2-12-7-1-6 3-9 8-13 5-5 7-11 13-11z" />
              <text x="14" y="51" fontFamily="Liberation Sans" fontSize="23" fontWeight="700" fill="#777">du</text>
            </svg>
            <b>经验</b>
          </MarkTop>
          <MarkUrl>jingyan.baidu.com</MarkUrl>
        </Mark>
        <StepPill>
          步骤阅读
          <svg width="13" height="24" viewBox="0 0 13 24" fill="none"><path d="M1 1l11 11L1 23" stroke="#a8a8a8" strokeWidth="2" /></svg>
        </StepPill>
      </Shot>
    </Page>
  );
}
